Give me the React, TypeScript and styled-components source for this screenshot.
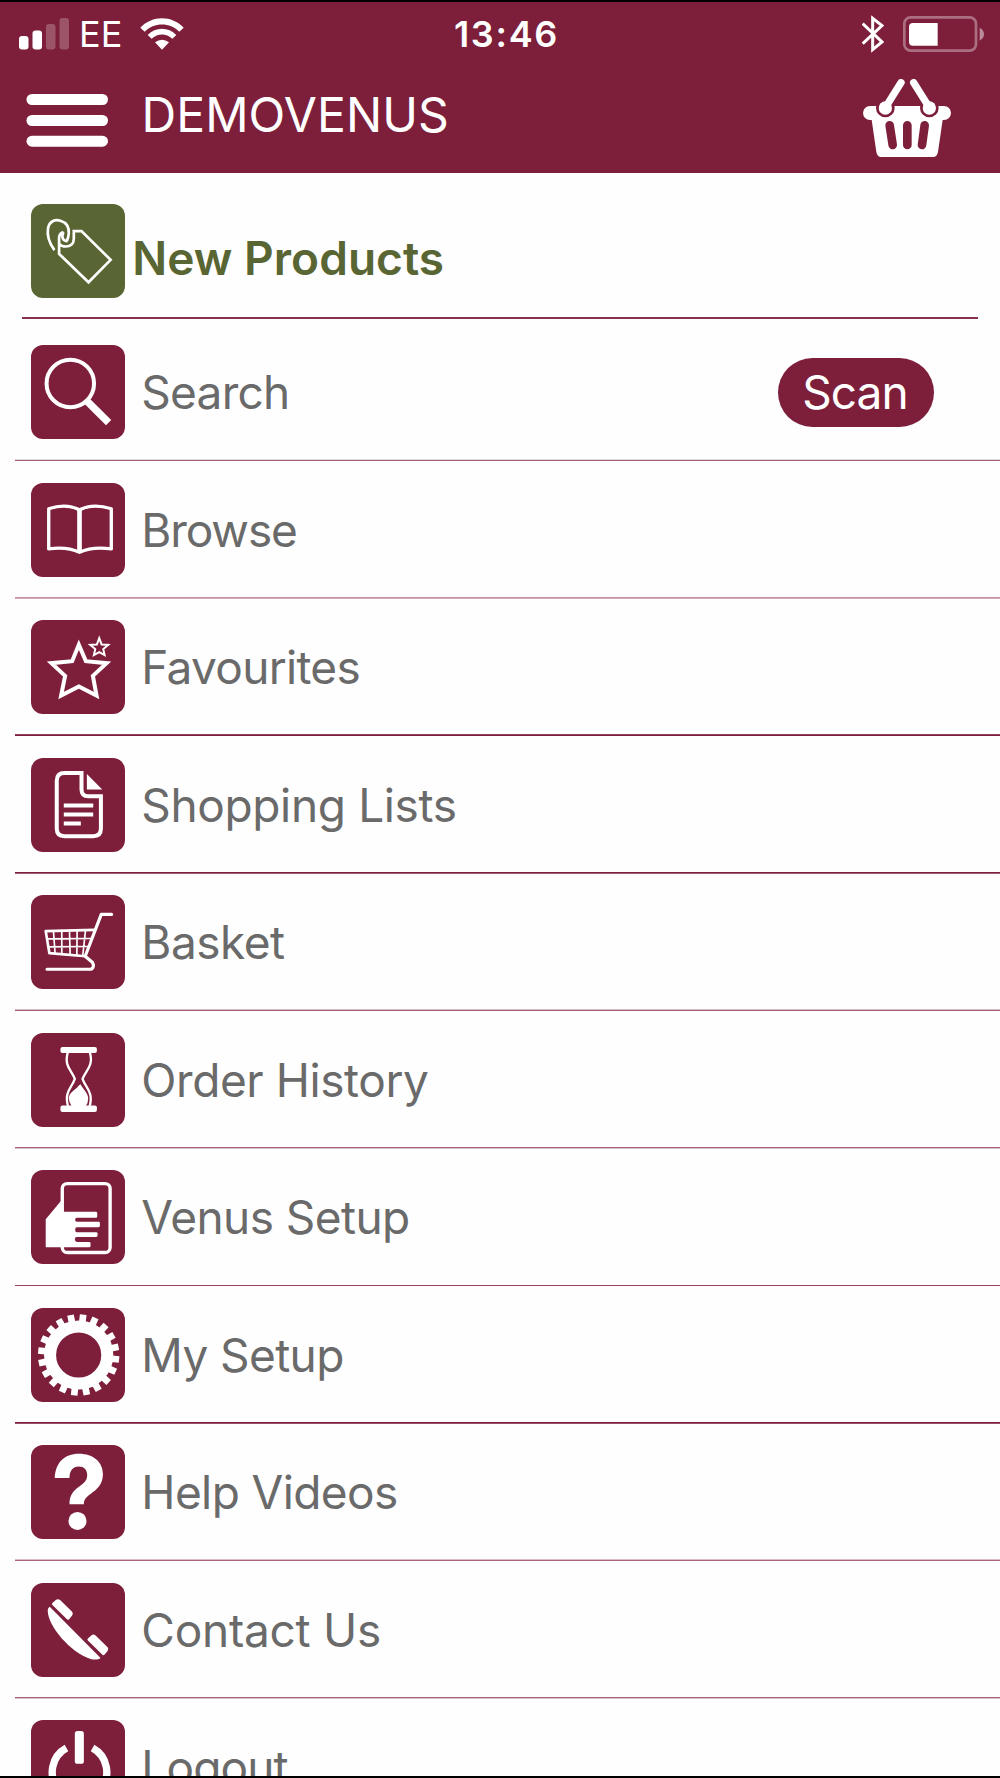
import React from 'react';
import styled, { createGlobalStyle } from 'styled-components';

const MAROON = '#7d1f3b';
const OLIVE = '#596634';
const GREY = '#6a6a6a';

const GlobalStyle = createGlobalStyle`
  body { margin: 0; background: #fff; }
  * { box-sizing: border-box; }
`;

const Screen = styled.div`
  display: flex;
  flex-direction: column;
  width: 1000px;
  height: 1778px;
  overflow: hidden;
  background: #fefefe;
  border-top: 2px solid #000;
  border-bottom: 2px solid #000;
  font-family: Inter, 'Liberation Sans', sans-serif;
  -webkit-font-smoothing: antialiased;
`;

const Header = styled.header`
  flex: none;
  height: 171px;
  background: ${MAROON};
  color: #fff;
`;

const StatusBar = styled.div`
  display: grid;
  grid-template-columns: 1fr auto 1fr;
  align-items: center;
  height: 64px;
  padding: 0 16px 0 19px;
`;

const StatusGroup = styled.div<{ $end?: boolean }>`
  display: flex;
  align-items: center;
  justify-content: ${(p) => (p.$end ? 'flex-end' : 'flex-start')};
`;

const Carrier = styled.span`
  margin: 0 18px 0 9px;
  font-size: 36px;
  line-height: 44px;
`;

const Clock = styled.span`
  font-size: 36px;
  font-weight: 600;
  line-height: 44px;
  letter-spacing: 1.7px;
  padding-left: 10px;
`;

const NavBar = styled.div`
  display: flex;
  align-items: center;
  height: 107px;
  padding: 0 49px 0 26px;
`;

const MenuButton = styled.button`
  display: flex;
  margin: 1px 33.5px 0 0;
  padding: 0;
  border: 0;
  background: none;
`;

const Title = styled.h1`
  flex: 1;
  margin: -9px 0 0;
  font-size: 48px;
  font-weight: 400;
  line-height: 58px;
  letter-spacing: 0.08px;
`;

const BasketButton = styled(MenuButton)`
  margin: -3px 0 0;
`;

const Featured = styled.div`
  flex: none;
  display: flex;
  align-items: flex-start;
  height: 146px;
  margin: 0 22px;
  padding: 31px 0 0 9px;
  border-bottom: 2px solid #86304b;
`;

const FeaturedLabel = styled.span`
  margin: 26px 0 0 7.3px;
  color: ${OLIVE};
  font-size: 46px;
  font-weight: 600;
  line-height: 56px;
  letter-spacing: 0.04px;
`;

const Row = styled.div<{ $height: number; $padTop: number; $upper: string; $lower: string }>`
  flex: none;
  display: flex;
  align-items: center;
  height: ${(p) => p.$height}px;
  margin-left: 15px;
  padding: ${(p) => p.$padTop}px 66px 2px 16px;
  background:
    linear-gradient(${(p) => p.$upper}, ${(p) => p.$upper}) 0 calc(100% - 1px) / 100% 1px no-repeat,
    linear-gradient(${(p) => p.$lower}, ${(p) => p.$lower}) 0 100% / 100% 1px no-repeat;
`;

const Label = styled.span<{ $tracking: number }>`
  flex: 1;
  margin-left: 16.3px;
  color: ${GREY};
  font-size: 46px;
  font-weight: 420;
  line-height: 56px;
  letter-spacing: ${(p) => p.$tracking - 0.06}px;
  white-space: nowrap;
`;

const Tile = styled.span<{ $color?: string }>`
  flex: none;
  display: block;
  width: 94px;
  height: 94px;
  border-radius: 12px;
  background: ${(p) => p.$color ?? MAROON};
`;

const Glyph = styled.svg`
  display: block;
  width: 94px;
  height: 94px;
  overflow: visible;
  fill: none;
  stroke: #fff;
`;

const ScanButton = styled.button`
  width: 156px;
  height: 69px;
  padding: 0 2px 0 0;
  border: 0;
  border-radius: 35px;
  background: ${MAROON};
  color: #fff;
  font: 400 46px/69px Inter, 'Liberation Sans', sans-serif;
  letter-spacing: -0.9px;
`;

const TagIcon = () => (
  <g strokeWidth="8">
    <path d="M70 138C56 119 47 96 51 72C55 52 71 45 88 50C108 56 114 72 113 88Q112 100 107 111" />
    <path d="M97 84C86 86 83 94 84 108V149L172 234L238 167L151 81H128V104C128 119 118 127 104 127Q91 127 85 120" />
    <path d="M97 84C90 99 95 111 109 111" />
  </g>
);

const SearchIcon = () => (
  <g>
    <circle cx="117.5" cy="115" r="71" strokeWidth="12" />
    <path d="M164 164L177 177" strokeWidth="14" />
    <path d="M169 169L232 232" strokeWidth="22" />
  </g>
);

const BookIcon = () => (
  <g>
    <path d="M53 77Q104 60 145 80Q186 60 240 77V197Q184 189 145 207Q106 189 53 197Z" strokeWidth="10" strokeLinejoin="round" />
    <path d="M145 80V208" strokeWidth="14" />
  </g>
);

const StarsIcon = () => (
  <g>
    <path d="M143 74L164 123L226 129L185 167L196 226L143 199L90 226L102 167L61 129L123 123Z" strokeWidth="12" />
    <path d="M204 54L211 73L231 74L216 87L220 105L204 96L188 105L192 87L177 74L197 73Z" strokeWidth="6" />
  </g>
);

const DocumentIcon = () => (
  <g strokeWidth="12">
    <path d="M151 45H100Q77 45 77 68V211Q77 234 100 234H186Q209 234 209 211V114H171Q151 114 151 94Z" />
    <path d="M167 48V94H213Z" fill="#fff" stroke="none" />
    <path d="M98 142H186M98 169H186M98 196H149" strokeWidth="12" />
  </g>
);

const CartIcon = () => (
  <g strokeLinejoin="round" strokeLinecap="round">
    <path d="M241 58H210L162 183L184 202C190 212 185 222 177 222H48" strokeWidth="9.500" />
    <path d="M190 104L44 108L55 174L163 183" strokeWidth="8" />
    <path d="M67 107L72 174M92 106V176M115 106L117 178M138 105L137 180M163 105L155 179M48 131L180 130M51 155L170 154" strokeWidth="5" />
  </g>
);

const HourglassIcon = () => (
  <g>
    <rect x="88" y="42" width="109" height="18" rx="6" fill="#fff" stroke="none" />
    <rect x="88" y="217" width="109" height="19" rx="6" fill="#fff" stroke="none" />
    <path d="M110 58C98 100 122 112 131 137C122 164 98 176 111 220M176 58C188 100 163 112 154 137C163 164 188 176 175 220" strokeWidth="7" />
    <path d="M148 153Q143 155 138 163C126 173 113 181 113 196Q114 208 121 218H164Q171 209 171 194C170 180 157 169 148 153Z" fill="#fff" stroke="none" />
  </g>
);

const HandIcon = () => (
  <g>
    <rect x="93.5" y="40.5" width="143" height="206" rx="15" strokeWidth="10" />
    <path
      d="M90 92V125H194Q198 125 198 129V139Q198 143 194 143H137Q132 143 132 149Q132 155 137 155H202Q206 155 206 159V166Q206 171 202 171H137Q132 171 132 178Q132 186 137 186H195Q199 186 199 190V196Q199 200 195 200H137Q131 200 131 207Q131 215 137 215H174Q178 215 178 219V227Q178 231 174 231H44V147Z"
      fill="#fff"
      stroke="none"
    />
  </g>
);

const GEAR_TEETH = 20;

const GearIcon = () => (
  <g>
    <circle cx="142.5" cy="140.5" r="85.5" strokeWidth="36" />
    {Array.from({ length: GEAR_TEETH }, (_, i) => (
      <path
        key={i}
        d="M142.5 40V19"
        strokeWidth="20"
        transform={`rotate(${6.4 + (i * 360) / GEAR_TEETH} 142.5 140.5)`}
      />
    ))}
  </g>
);

const HelpIcon = () => (
  <g fill="#fff" stroke="none">
    <path d="M71 99C73 53 99 26 143 26C187 26 215 51 215 87C215 144 158 142 158 177H115C115 121 168 128 168 90C168 74 158 64 143 64C125 64 115 77 115 99Z" />
    <circle cx="139" cy="227" r="27" />
  </g>
);

const PhoneIcon = () => (
  <g fill="#fff" stroke="none">
    <path d="M56 71L208 224C201 230 190 230 178 227C118 208 50 128 50 82Q50 74 56 71Z" />
    <path d="M64 60L75 50Q81 46 87 51L123 86Q127 91 123 97L114 108Q110 112 106 107L64 66Q61 63 64 60Z" />
    <path d="M170 166L181 156Q187 152 193 157L229 192Q233 197 229 203L220 214Q216 218 212 213L170 172Q167 169 170 166Z" />
  </g>
);

const PowerIcon = () => (
  <g>
    <path d="M106 84A81.500 81.500 0 1 0 184 84" strokeWidth="22" />
    <rect x="131" y="33" width="27" height="98" rx="8" fill="#fff" stroke="none" />
  </g>
);

const SignalBars = () => (
  <svg width="51" height="32" viewBox="0 0 51 32" fill="#fff">
    <rect x="0" y="18" width="9.500" height="13.500" rx="3" />
    <rect x="13.500" y="12.500" width="9.500" height="19" rx="3" />
    <rect x="27" y="6" width="9.500" height="25.500" rx="3" opacity="0.24" />
    <rect x="40.500" y="0" width="9.500" height="31.500" rx="3" opacity="0.24" />
  </svg>
);

const WifiIcon = () => (
  <svg width="44" height="32" viewBox="0 0 132 96" fill="#fff">
    <path d="M1 29C36 -9 96 -9 131 29L118 41C89 12 43 12 14 41Z" />
    <path d="M23 51C47 26 85 26 109 51L97 62C79 45 53 45 35 62Z" />
    <path d="M45 73Q66 58 87 73L66 95Z" />
  </svg>
);

const BluetoothIcon = () => (
  <svg width="22" height="38" viewBox="0 0 66 114" fill="none" stroke="#fff" strokeWidth="9">
    <path d="M2 26L60 81L32 104V10L60 32L2 86" />
  </svg>
);

const BatteryShape = styled.svg`
  margin-left: 19px;
`;

const BatteryIcon = () => (
  <BatteryShape width="81" height="36" viewBox="0 0 243 108">
    <rect x="4" y="4" width="215" height="100" rx="19" fill="none" stroke="#fff" strokeWidth="8" opacity="0.36" />
    <path d="M230 35Q243 42 243 55Q243 67 230 74Z" fill="#fff" opacity="0.48" />
    <path d="M104 21V89H30Q18 89 18 77V33Q18 21 30 21Z" fill="#fff" />
  </BatteryShape>
);

const MenuIcon = () => (
  <svg width="82" height="53" viewBox="0 0 82 53" fill="#fff">
    <rect x="0.500" width="81.500" height="11" rx="5.500" />
    <rect x="0.500" y="21" width="81.500" height="11" rx="5.500" />
    <rect x="0.500" y="41.700" width="81.500" height="11" rx="5.500" />
  </svg>
);

const BasketIcon = () => (
  <svg width="88" height="78.300" viewBox="0 0 264 235" fill="none" strokeLinecap="round">
    <path
      d="M21 81H243A21 21 0 0 1 243 123H239L225 219Q222 235 208 235H57Q43 235 40 219L26 123H21A21 21 0 0 1 21 81Z"
      fill="#fff"
    />
    <g fill={MAROON}>
      <circle cx="67" cy="87" r="28" />
      <circle cx="199" cy="87" r="28" />
    </g>
    <path d="M80 139L89 198M133 139V198M185 139L177 198" stroke={MAROON} strokeWidth="26" />
    <path d="M114 11L67 86M152 11L199 86" stroke="#fff" strokeWidth="22" />
    <g fill="#fff">
      <circle cx="67" cy="87" r="20" />
      <circle cx="199" cy="87" r="20" />
    </g>
  </svg>
);

interface MenuEntry {
  label: string;
  icon: React.ComponentType;
  tracking: number;
  height: number;
  padTop?: number;
  upper: string;
  lower: string;
  scan?: boolean;
}

const entries: MenuEntry[] = [
  { label: 'Search', icon: SearchIcon, tracking: -0.7, height: 142, padTop: 6, upper: '#e3d6da', lower: '#a65f77', scan: true },
  { label: 'Browse', icon: BookIcon, tracking: -1.05, height: 138, upper: '#c393a3', lower: '#d2a9b7' },
  { label: 'Favourites', icon: StarsIcon, tracking: -0.65, height: 137, upper: '#95405d', lower: '#7d1f3b' },
  { label: 'Shopping Lists', icon: DocumentIcon, tracking: -0.3, height: 138, upper: '#7d1f3b', lower: '#a35d75' },
  { label: 'Basket', icon: CartIcon, tracking: -0.44, height: 137, upper: '#d9bcc6', lower: '#a65f77' },
  { label: 'Order History', icon: HourglassIcon, tracking: -0.36, height: 138, upper: '#a65f77', lower: '#dcc3cb' },
  { label: 'Venus Setup', icon: HandIcon, tracking: -0.5, height: 137, upper: '#fefefe', lower: '#99435f' },
  { label: 'My Setup', icon: GearIcon, tracking: -0.55, height: 138, upper: '#7d1f3b', lower: '#98516a' },
  { label: 'Help Videos', icon: HelpIcon, tracking: -0.53, height: 137, upper: '#d9bcc6', lower: '#a9657c' },
  { label: 'Contact Us', icon: PhoneIcon, tracking: -0.18, height: 138, upper: '#a65f77', lower: '#dcc3cb' },
  { label: 'Logout', icon: PowerIcon, tracking: -0.8, height: 137, upper: '#fefefe', lower: '#99435f' },
];

export default function App() {
  return (
    <Screen>
      <GlobalStyle />
      <Header>
        <StatusBar>
          <StatusGroup>
            <SignalBars />
            <Carrier>EE</Carrier>
            <WifiIcon />
          </StatusGroup>
          <Clock>13:46</Clock>
          <StatusGroup $end>
            <BluetoothIcon />
            <BatteryIcon />
          </StatusGroup>
        </StatusBar>
        <NavBar>
          <MenuButton aria-label="Menu">
            <MenuIcon />
          </MenuButton>
          <Title>DEMOVENUS</Title>
          <BasketButton aria-label="Basket">
            <BasketIcon />
          </BasketButton>
        </NavBar>
      </Header>
      <Featured>
        <Tile $color={OLIVE}>
          <Glyph viewBox="0 0 281 281">
            <TagIcon />
          </Glyph>
        </Tile>
        <FeaturedLabel>New Products</FeaturedLabel>
      </Featured>
      {entries.map(({ label, icon: Icon, tracking, height, padTop = 1, upper, lower, scan }) => (
        <Row key={label} $height={height} $padTop={padTop} $upper={upper} $lower={lower}>
          <Tile>
            <Glyph viewBox="0 0 281 281">
              <Icon />
            </Glyph>
          </Tile>
          <Label $tracking={tracking}>{label}</Label>
          {scan && <ScanButton>Scan</ScanButton>}
        </Row>
      ))}
    </Screen>
  );
}
